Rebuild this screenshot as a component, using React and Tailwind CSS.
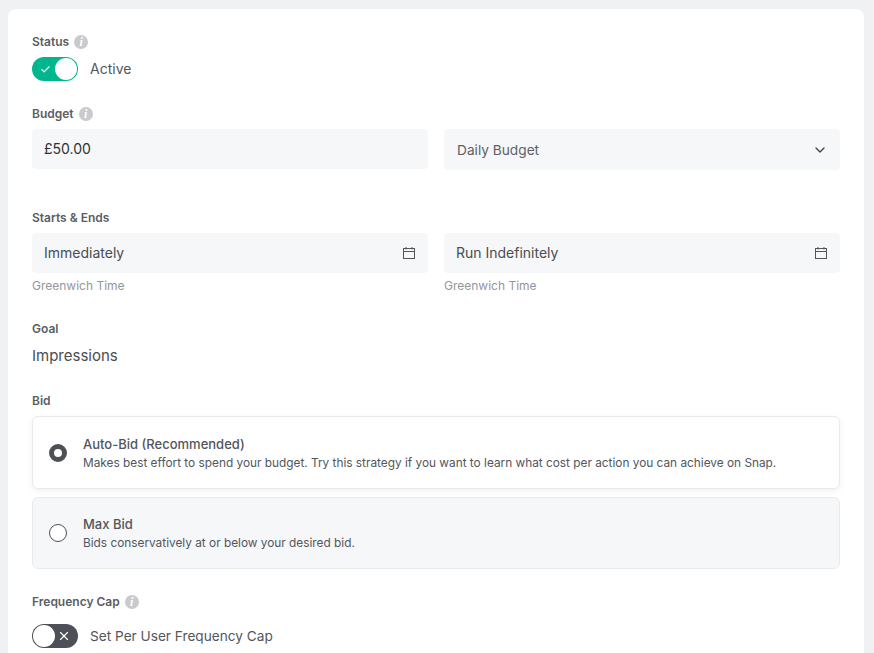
import { Check, ChevronDown, X } from 'lucide-react';

function InfoDot() {
  return (
    <span className="flex h-[14px] w-[14px] items-center justify-center rounded-full bg-[#c9cace] font-['Liberation_Serif',serif] text-[12px] font-bold italic leading-none text-white">
      i
    </span>
  );
}

function Label({ children, info }) {
  return (
    <div className="flex h-[18px] items-center gap-[5px] text-[12px] font-semibold leading-[18px] text-[#5a5d63]">
      {children}
      {info && <InfoDot />}
    </div>
  );
}

function CalendarIcon() {
  return (
    <svg width="14" height="14" viewBox="0 0 14 14" fill="none" stroke="#53565b" strokeWidth="1">
      <rect x="1.5" y="2.5" width="11" height="10" />
      <path d="M1.5 5.5h11M4 1v2.5M10 1v2.5" />
    </svg>
  );
}

function DateField({ value }) {
  return (
    <div>
      <div className="flex h-10 items-center justify-between rounded-[4px] bg-[#f6f7f9] px-3 pb-px text-[14px] text-[#4a4d52]">
        {value}
        <CalendarIcon />
      </div>
      <div className="mt-[4px] text-[12px] leading-[18px] text-[#93969c]">Greenwich Time</div>
    </div>
  );
}

function BidOption({ title, text, selected }) {
  return (
    <div
      className={`flex items-center rounded-[6px] border border-[#e9eaec] pl-4 ${
        selected ? 'h-[73px] bg-white shadow-[0_2px_6px_rgba(0,0,0,0.06)]' : 'h-[72px] bg-[#f6f7f9]'
      }`}
    >
      {selected ? (
        <span className="h-[18px] w-[18px] rounded-full border-[5px] border-[#4d5056] bg-white" />
      ) : (
        <span className="h-[18px] w-[18px] rounded-full border border-[#4d5056] bg-white" />
      )}
      <div className="ml-4 pt-px">
        <div className="text-[13px] font-medium leading-[19px] text-[#53565b]">{title}</div>
        <div className="text-[11.84px] leading-[18px] text-[#53565b]">{text}</div>
      </div>
    </div>
  );
}

export default function App() {
  return (
    <div className="h-[653px] overflow-hidden bg-[#f0f1f3] pl-2 pr-[10px] pt-[9px] font-['Inter',sans-serif]">
      <div className="h-[700px] rounded-t-[8px] bg-white px-6 pt-6">
        <Label info>Status</Label>
        <div className="mt-[6px] flex items-center gap-3">
          <div className="flex h-6 w-[46px] items-center justify-between rounded-full bg-[#00b78d] pl-2 pr-[1px]">
            <Check className="h-[11px] w-[11px] text-white" strokeWidth={2.5} />
            <span className="h-[22px] w-[22px] rounded-full bg-white" />
          </div>
          <span className="pb-px text-[14px] text-[#53565b]">Active</span>
        </div>

        <div className="mt-6">
          <Label info>Budget</Label>
        </div>
        <div className="mt-[6px] grid grid-cols-2 items-start gap-4">
          <div className="flex h-10 items-center rounded-[4px] bg-[#f6f7f9] pb-px pl-3 text-[14px] text-[#2f3236]">
            £50.00
          </div>
          <div className="flex h-[41px] items-center justify-between rounded-[4px] bg-[#f6f7f9] pl-[13px] pr-3 pt-px text-[13.7px] text-[#5d6066]">
            Daily Budget
            <ChevronDown className="h-4 w-4 text-[#3f4246]" strokeWidth={2} />
          </div>
        </div>

        <div className="mt-[39px]">
          <Label>Starts &amp; Ends</Label>
        </div>
        <div className="mt-[6px] grid grid-cols-2 gap-4">
          <DateField value="Immediately" />
          <DateField value="Run Indefinitely" />
        </div>

        <div className="mt-[25px]">
          <Label>Goal</Label>
        </div>
        <div className="mt-[7px] text-[15px] leading-[22px] text-[#4a4d52]">Impressions</div>

        <div className="mt-[25px]">
          <Label>Bid</Label>
        </div>
        <div className="mt-[6px] flex flex-col gap-2">
          <BidOption
            selected
            title="Auto-Bid (Recommended)"
            text="Makes best effort to spend your budget. Try this strategy if you want to learn what cost per action you can achieve on Snap."
          />
          <BidOption title="Max Bid" text="Bids conservatively at or below your desired bid." />
        </div>

        <div className="mt-6">
          <Label info>Frequency Cap</Label>
        </div>
        <div className="mt-[13px] flex items-center gap-3">
          <div className="flex h-6 w-[46px] items-center justify-between rounded-full bg-[#4d5056] pl-[1px] pr-[7px]">
            <span className="h-[22px] w-[22px] rounded-full bg-white" />
            <X className="h-[14px] w-[14px] text-white" strokeWidth={2} />
          </div>
          <span className="text-[13.65px] text-[#53565b]">Set Per User Frequency Cap</span>
        </div>
      </div>
    </div>
  );
}
